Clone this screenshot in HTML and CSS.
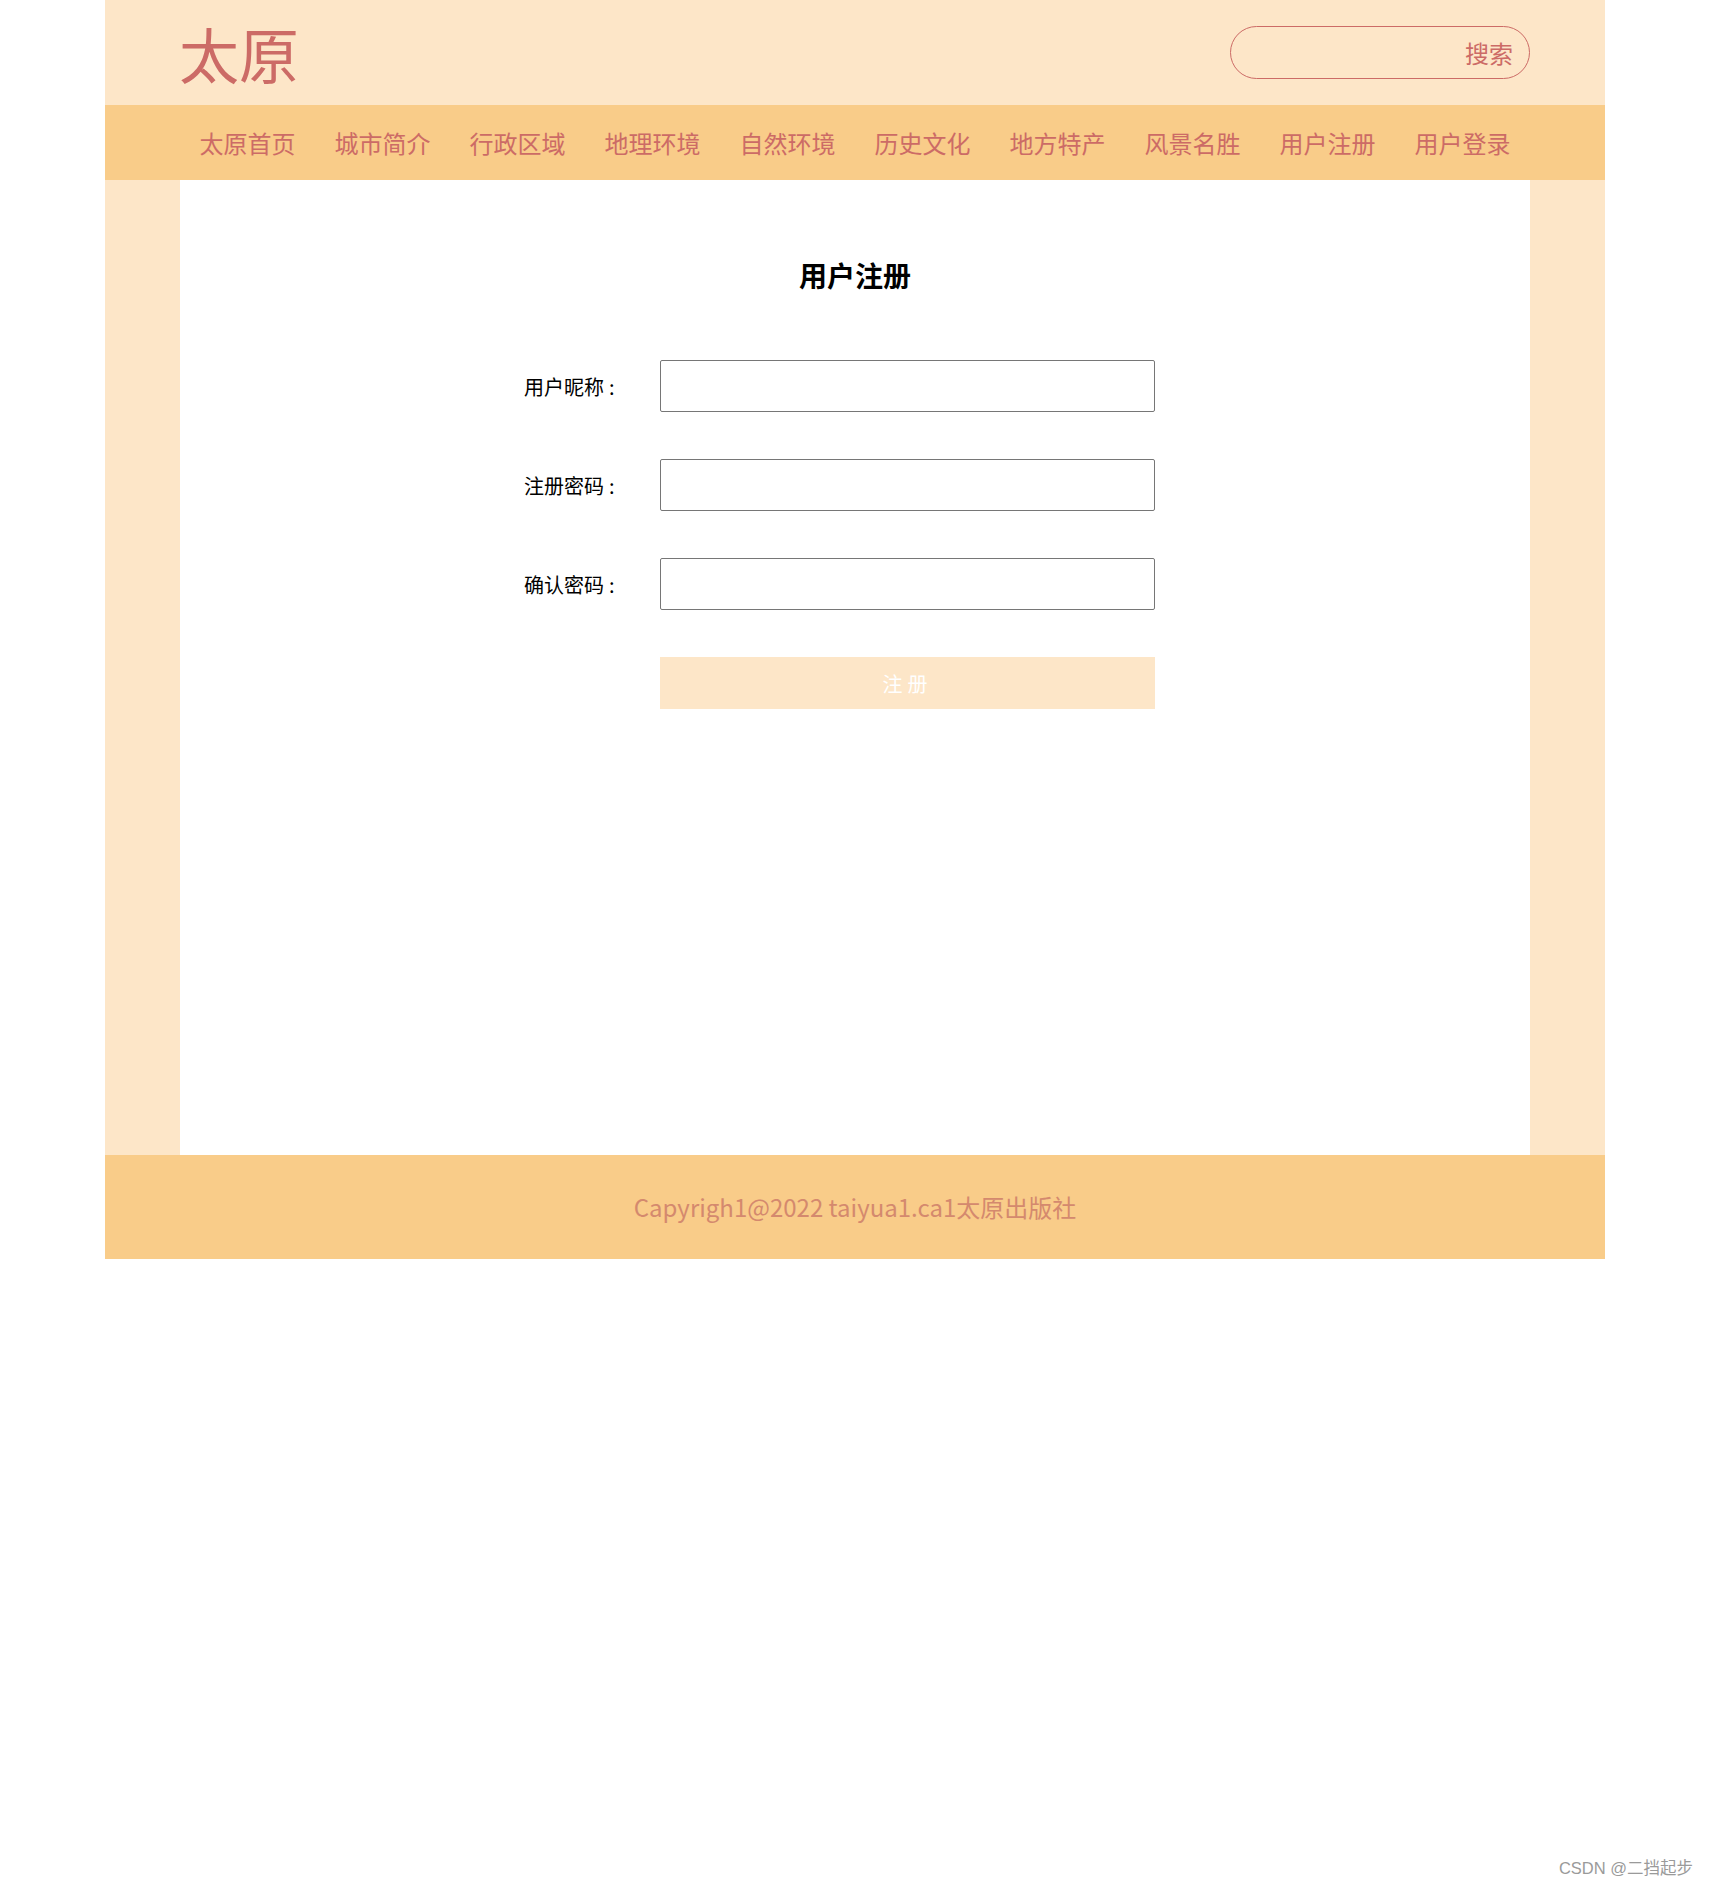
FILE: index.html
```html
<!DOCTYPE html>
<html lang="zh-CN">
<head>
<meta charset="utf-8">
<title>用户注册 - 太原</title>
<link rel="stylesheet" href="styles.css">
</head>
<body>
<div class="page">
  <header class="header">
    <div class="logo">太原</div>
    <div class="search">
      <input class="search-input" type="text">
      <span class="search-btn">搜索</span>
    </div>
  </header>
  <nav class="nav">
    <a class="nav-item">太原首页</a>
    <a class="nav-item">城市简介</a>
    <a class="nav-item">行政区域</a>
    <a class="nav-item">地理环境</a>
    <a class="nav-item">自然环境</a>
    <a class="nav-item">历史文化</a>
    <a class="nav-item">地方特产</a>
    <a class="nav-item">风景名胜</a>
    <a class="nav-item">用户注册</a>
    <a class="nav-item">用户登录</a>
  </nav>
  <main class="main">
    <div class="content">
      <h2 class="title">用户注册</h2>
      <form class="form">
        <div class="row">
          <label class="label">用户昵称<span class="colon">:</span></label>
          <input class="field" type="text">
        </div>
        <div class="row">
          <label class="label">注册密码<span class="colon">:</span></label>
          <input class="field" type="password">
        </div>
        <div class="row">
          <label class="label">确认密码<span class="colon">:</span></label>
          <input class="field" type="password">
        </div>
        <div class="row">
          <span></span>
          <button class="submit" type="button">注册</button>
        </div>
      </form>
    </div>
  </main>
  <footer class="footer">Capyrigh1@2022 taiyua1.ca1太原出版社</footer>
</div>
<div class="watermark">CSDN @二挡起步</div>
</body>
</html>
```

FILE: styles.css
```css
html, body {
  margin: 0;
  padding: 0;
  background: #ffffff;
}
body {
  font-family: "Noto Sans CJK SC", "Noto Sans", sans-serif;
  min-height: 1886px;
  position: relative;
}
.page {
  width: 1500px;
  margin: 0 auto;
}
.header {
  height: 105px;
  background: #fde6c8;
  padding: 0 75px;
  display: flex;
  align-items: center;
  justify-content: space-between;
}
.logo {
  font-size: 60px;
  line-height: 60px;
  color: #cc6b66;
  margin-left: -1px;
  margin-top: 0;
}
.search {
  width: 300px;
  height: 53px;
  box-sizing: border-box;
  border: 1px solid #cc6b66;
  border-radius: 27px;
  display: flex;
  align-items: center;
  padding: 0 16px 0 20px;
}
.search-input {
  flex: 1;
  min-width: 0;
  border: none;
  outline: none;
  background: transparent;
  height: 40px;
  font-size: 20px;
}
.search-btn {
  font-size: 24px;
  line-height: 24px;
  color: #cc6b66;
  margin-top: 1px;
}
.nav {
  height: 75px;
  background: #f9cc89;
  padding: 0 75px;
  display: flex;
}
.nav-item {
  flex: 1;
  text-align: center;
  font-size: 24px;
  line-height: 75px;
  color: #cc6b66;
  text-decoration: none;
}
.main {
  background: #fde6c8;
  padding: 0 75px;
}
.content {
  background: #ffffff;
  min-height: 975px;
  box-sizing: border-box;
  padding-top: 75px;
}
.title {
  margin: 0;
  height: 40px;
  line-height: 40px;
  font-size: 28px;
  font-weight: bold;
  color: #000000;
  text-align: center;
}
.form {
  width: 662px;
  margin: 65px auto 0;
  display: flex;
  flex-direction: column;
  gap: 47px;
}
.row {
  display: grid;
  grid-template-columns: 136px 495px;
  align-items: center;
  height: 52px;
}
.label {
  font-size: 20px;
  font-weight: 400;
  color: #000000;
}
.colon {
  margin-left: 5px;
}
.field {
  box-sizing: border-box;
  width: 495px;
  height: 52px;
  border: 1px solid #767676;
  border-radius: 2px;
  background: #ffffff;
  margin: 0;
  padding: 0 10px;
  font-size: 20px;
}
.submit {
  width: 495px;
  height: 52px;
  border: none;
  margin: 0;
  background: #fde6c8;
  color: #ffffff;
  font-family: "Noto Sans CJK SC", sans-serif;
  font-size: 20px;
  letter-spacing: 5px;
  padding: 0;
}
.footer {
  height: 104px;
  background: #f9cc89;
  text-align: center;
  line-height: 104px;
  font-size: 24px;
  color: #d4896e;
}
.watermark {
  position: absolute;
  right: 17px;
  top: 1857px;
  font-family: "Liberation Sans", "Noto Sans CJK SC", sans-serif;
  font-size: 16.5px;
  line-height: 22px;
  color: #9a9a9a;
}
```
